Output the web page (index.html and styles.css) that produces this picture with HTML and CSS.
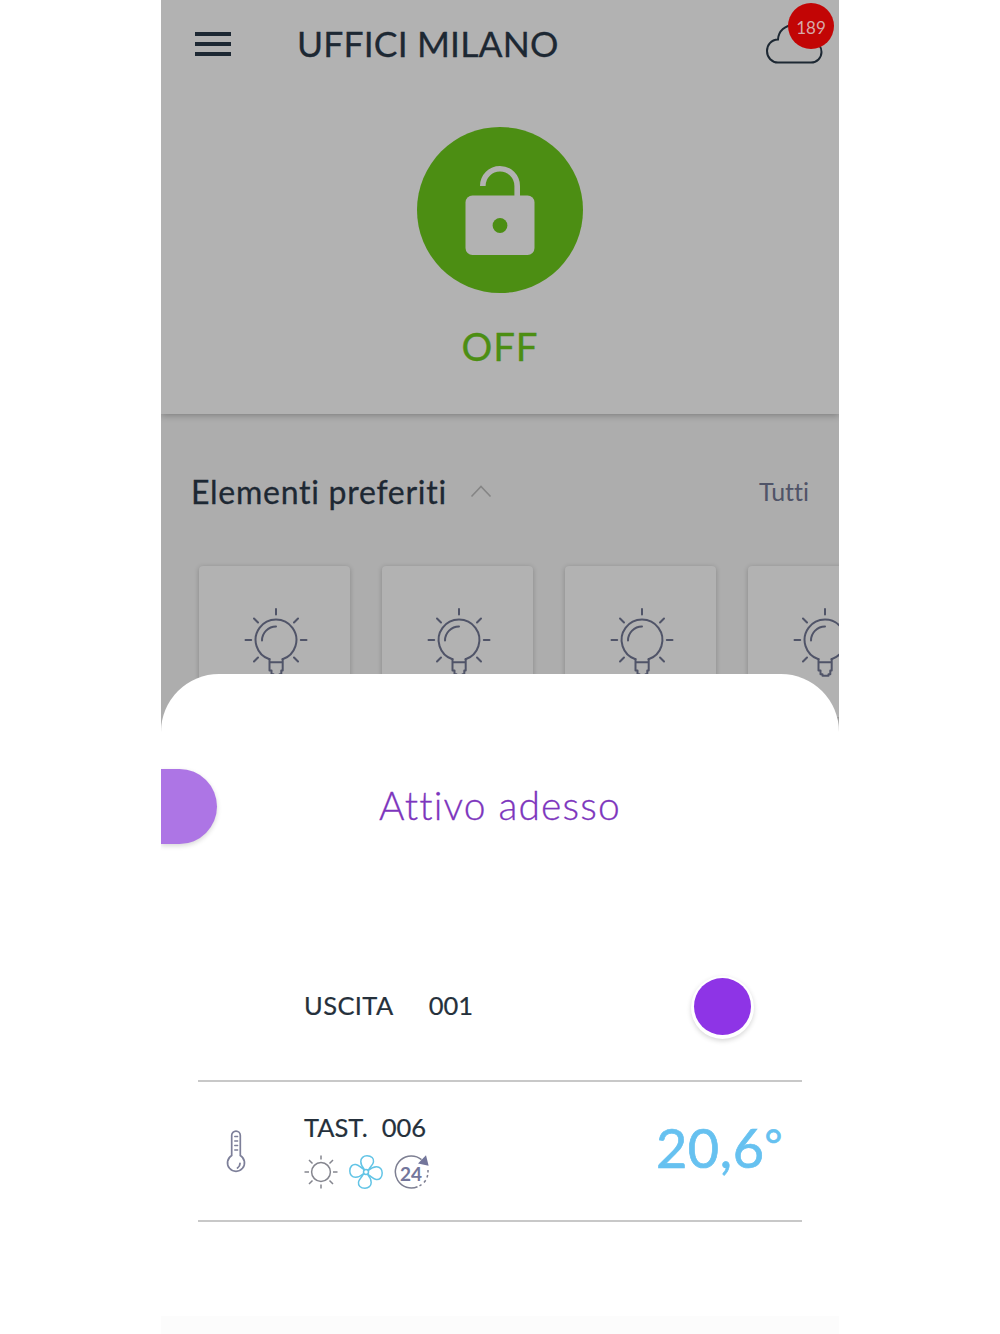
FILE: index.html
```html
<!DOCTYPE html>
<html lang="it">
<head>
    <meta charset="UTF-8">
    <meta name="viewport" content="width=device-width, initial-scale=1.0">
    <title>Uffici Milano</title>
    <link rel="stylesheet" href="styles.css">
</head>
<body>
    <!-- icons used more than once -->
    <svg class="defs" width="0" height="0">
        <symbol id="bulb" viewBox="0 0 64 72">
            <g fill="none" stroke="#505468" stroke-width="2" stroke-linecap="round" stroke-linejoin="round">
                <path d="M25.5 52.3a20.4 20.4 0 1 1 13 0"/>
                <path d="M25.5 52v11.600h2v3.600h2v1.600h6v-1.600h1.800v-3.600h1.400V52M25.500 55.300h13"/>
                <path d="M18 33.500a14 14 0 0 1 14-14"/>
                <path d="M32 2v5.500M1.500 33h5.700M56.800 33h5.700M10 11.500l4 4M54 11.500l-4 4M10 54.500l4-4M54 54.500l-4-4"/>
            </g>
        </symbol>
    </svg>

    <div class="phone">
        <div class="panel">
            <div class="header">
                <div class="menu"><span></span><span></span><span></span></div>
                <h1 class="title">UFFICI MILANO</h1>
                <div class="cloud">
                    <svg width="58" height="42" viewBox="0 0 58 42" fill="none" stroke="#1d2833" stroke-width="2">
                        <path d="M13 16.500C6 16.800 2 22 2 28c0 6.500 5 11.500 11 11.500h33c6 0 10.500-4.700 10.500-10.500 0-5-3-9-8-10C48 9 40 2 29.500 2 20 2 13.500 8 13 16.500z"/>
                    </svg>
                    <span class="badge">189</span>
                </div>
            </div>
            <div class="lock">
                <svg width="70" height="91" viewBox="0 0 70 91">
                    <path d="M17.800 21a17.200 17.200 0 0 1 34.400 0v12" fill="none" stroke="#b2b2b2" stroke-width="5.600"/>
                    <rect x="0.500" y="30.500" width="69" height="59.500" rx="7" fill="#b2b2b2"/>
                    <circle cx="35" cy="60.500" r="7.400" fill="#4c8e13"/>
                </svg>
            </div>
            <p class="state">OFF</p>
        </div>

        <div class="favorites">
            <div class="fav-head">
                <h2>Elementi preferiti</h2>
                <svg class="chevron" width="22" height="14" viewBox="0 0 22 14"><path d="M1.500 12.500L11 2.500l9.500 10" fill="none" stroke="#858585" stroke-width="1.600"/></svg>
                <a class="all">Tutti</a>
            </div>
            <div class="cards">
                <div class="card"><svg width="64" height="72"><use href="#bulb"/></svg></div>
                <div class="card"><svg width="64" height="72"><use href="#bulb"/></svg></div>
                <div class="card"><svg width="64" height="72"><use href="#bulb"/></svg></div>
                <div class="card"><svg width="64" height="72"><use href="#bulb"/></svg></div>
            </div>
        </div>

        <div class="sheet">
            <div class="sheet-head">
                <div class="tab"></div>
                <h2 class="sheet-title">Attivo adesso</h2>
            </div>
            <ul class="list">
                <li>
                    <span class="icon"></span>
                    <div class="name"><span class="uscita">USCITA</span><span class="num">001</span></div>
                    <span class="dot"></span>
                </li>
                <li>
                    <span class="icon">
                        <svg width="20" height="43" viewBox="0 0 20 43" fill="none" stroke="#7d7f99" stroke-width="1.700" stroke-linecap="round">
                            <path d="M5.700 25.500V5.500a4.300 4.300 0 0 1 8.600 0v20a8.500 8.500 0 1 1-8.600 0z"/>
                            <path d="M8.700 6.500h3M8.700 11h3M8.700 15.500h3M8.700 20h3" stroke-width="1.300"/>
                            <path d="M14 33.500c0 2-1 3.500-2.500 4.500" stroke-width="1.800"/>
                        </svg>
                    </span>
                    <div class="name">
                        <span class="tast">TAST.</span><span class="num">006</span>
                        <div class="modes">
                            <svg width="34" height="34" viewBox="0 0 34 34" fill="none" stroke="#85868f" stroke-width="1.500">
                                <circle cx="17" cy="17" r="9.400"/>
                                <path d="M17 0.500v4M17 29.500v4M0.500 17h4.500M29 17h4.500M5 5l3.500 3.500M29 5l-3.500 3.500M5 29l3.500-3.500M29 29l-3.500-3.500"/>
                            </svg>
                            <svg width="34" height="34" viewBox="0 0 34 34" fill="none" stroke="#62c4e6" stroke-width="1.500">
                                <circle cx="17" cy="17" r="2.500"/>
                                <path id="blade" d="M15.500 14.800C13.500 12.500 11.800 9.500 11.800 6.500 11.800 3 14.500.8 18 .8c4.500 0 7 2.700 6.500 6-.6 3.500-3.200 4.500-5.300 8.800"/>
                                <use href="#blade" transform="rotate(90 17 17)"/>
                                <use href="#blade" transform="rotate(180 17 17)"/>
                                <use href="#blade" transform="rotate(270 17 17)"/>
                            </svg>
                            <span class="h24">
                                <svg width="36" height="34" viewBox="0 0 36 34" fill="none" stroke="#7d7f92" stroke-width="1.500">
                                    <path d="M27.500 4.600A16 16 0 1 0 23.500 31.700"/>
                                    <path d="M25.500 30.900l2-1.200M30 27.500l1.700-2.300M33 22.500l.7-2.500M34 17.500v-2.500"/>
                                    <path d="M24 8.500l8-8.300 2.600 10.600z" fill="#73769b" stroke="none"/>
                                </svg>
                                <b>24</b>
                            </span>
                        </div>
                    </div>
                    <span class="temp">20,6<span class="deg">°</span></span>
                </li>
            </ul>
            <div class="bottom"></div>
        </div>
    </div>
</body>
</html>
```
FILE: styles.css
```css
*{
    margin: 0;
    padding: 0;
    box-sizing: border-box;
}
body{
    background: #fff;
    font-family: Lato, "Liberation Sans", sans-serif;
    font-variant-ligatures: none;
    color: #1d2833;
}
h1, h2{
    font-weight: 400;
}
.defs{
    position: absolute;
}
.phone{
    position: relative;
    width: 678px;
    height: 1334px;
    margin: 0 auto;
    background: #adadad;
    overflow: hidden;
}

/* top panel */
.panel{
    position: relative;
    height: 414px;
    background: #b2b2b2;
    box-shadow: 0 1px 7px rgba(0,0,0,.3);
}
.header{
    display: flex;
    align-items: center;
    height: 87px;
    padding: 0 16px 0 34px;
}
.menu{
    display: grid;
    gap: 6px;
    width: 36px;
}
.menu span{
    height: 4px;
    background: #1d2833;
}
.title{
    flex: 1;
    padding-left: 66px;
    font-size: 35.5px;
    line-height: 43px;
    letter-spacing: .15px;
    -webkit-text-stroke: .3px;
}
.cloud{
    position: relative;
    width: 58px;
    height: 42px;
}
.badge{
    position: absolute;
    left: 23px;
    top: -20px;
    width: 46px;
    height: 46px;
    border-radius: 50%;
    background: #c20505;
    color: #d6a9a9;
    font-size: 17px;
    line-height: 49px;
    text-align: center;
}
.lock{
    display: flex;
    justify-content: center;
    width: 166px;
    height: 166px;
    margin: 40px auto 0;
    padding-top: 38px;
    border-radius: 50%;
    background: #4c8e13;
}
.state{
    margin-top: 30px;
    color: #4c8e13;
    font-size: 38.5px;
    line-height: 46px;
    letter-spacing: .9px;
    text-align: center;
    -webkit-text-stroke: .3px;
}

/* favorites */
.fav-head{
    display: flex;
    align-items: center;
    height: 152px;
    padding: 2px 30px 0;
}
.fav-head h2{
    font-size: 32px;
    letter-spacing: .73px;
    -webkit-text-stroke: .3px;
}
.chevron{
    margin-left: 23px;
}
.all{
    margin-left: auto;
    color: #505468;
    font-size: 25px;
}
.cards{
    display: flex;
    gap: 32px;
    padding-left: 38px;
}
.card{
    flex: none;
    width: 151px;
    height: 151px;
    padding: 41px 0 0 44.5px;
    border-radius: 4px;
    background: #b2b2b2;
    box-shadow: 0 1px 5px rgba(0,0,0,.22);
}

/* bottom sheet */
.sheet{
    position: absolute;
    left: 0;
    top: 674px;
    display: flex;
    flex-direction: column;
    width: 678px;
    height: 660px;
    border-radius: 58px 58px 0 0;
    background: #fff;
}
.sheet-head{
    display: grid;
    grid-template-columns: 56px 1fr 56px;
    align-items: center;
    margin-top: 95px;
}
.tab{
    height: 75px;
    border-radius: 0 38px 38px 0;
    background: #ad75e5;
    box-shadow: 0 2px 5px rgba(0,0,0,.16);
}
.sheet-title{
    padding-bottom: 4px;
    color: #7d35bd;
    font-size: 39px;
    font-weight: 300;
    line-height: 46px;
    letter-spacing: 1.15px;
    text-align: center;
    -webkit-text-stroke: .3px;
}
.list{
    flex: 1;
    margin: 88px 37px 0;
    list-style: none;
}
.list li{
    display: grid;
    grid-template-columns: 106px 1fr auto;
    align-items: center;
    height: 150px;
    border-bottom: 2px solid #c8c8c8;
}
.list li + li{
    height: 140px;
}
.icon{
    display: flex;
    padding-left: 28px;
}
.name{
    padding-bottom: 2px;
    color: #25303b;
    font-size: 25.5px;
    line-height: 30px;
    letter-spacing: .4px;
    -webkit-text-stroke: .2px;
}
.uscita{
    margin-right: 35px;
}
.tast{
    margin-right: 14px;
    letter-spacing: 0;
}
.num{
    letter-spacing: 0;
}
.dot{
    width: 57px;
    height: 57px;
    margin-right: 51px;
    border-radius: 50%;
    background: #8e34e6;
    box-shadow: 0 1px 0 3px #fff, 0 3px 5px 3px rgba(0,0,0,.16);
}
.modes{
    display: flex;
    gap: 11px;
    height: 34px;
    margin-top: 13px;
    letter-spacing: 0;
    -webkit-text-stroke: 0;
}
.h24{
    position: relative;
}
.h24 b{
    position: absolute;
    left: 6px;
    top: 4px;
    color: #73769b;
    font-size: 19px;
}
.temp{
    display: flex;
    margin-right: 19px;
    padding-bottom: 7px;
    color: #66c1f0;
    font-size: 54px;
    line-height: 64px;
    letter-spacing: .6px;
    -webkit-text-stroke: .7px;
}
.deg{
    font-size: 43px;
    line-height: 55px;
}
.bottom{
    height: 18px;
    background: #fcfcfc;
}
```
